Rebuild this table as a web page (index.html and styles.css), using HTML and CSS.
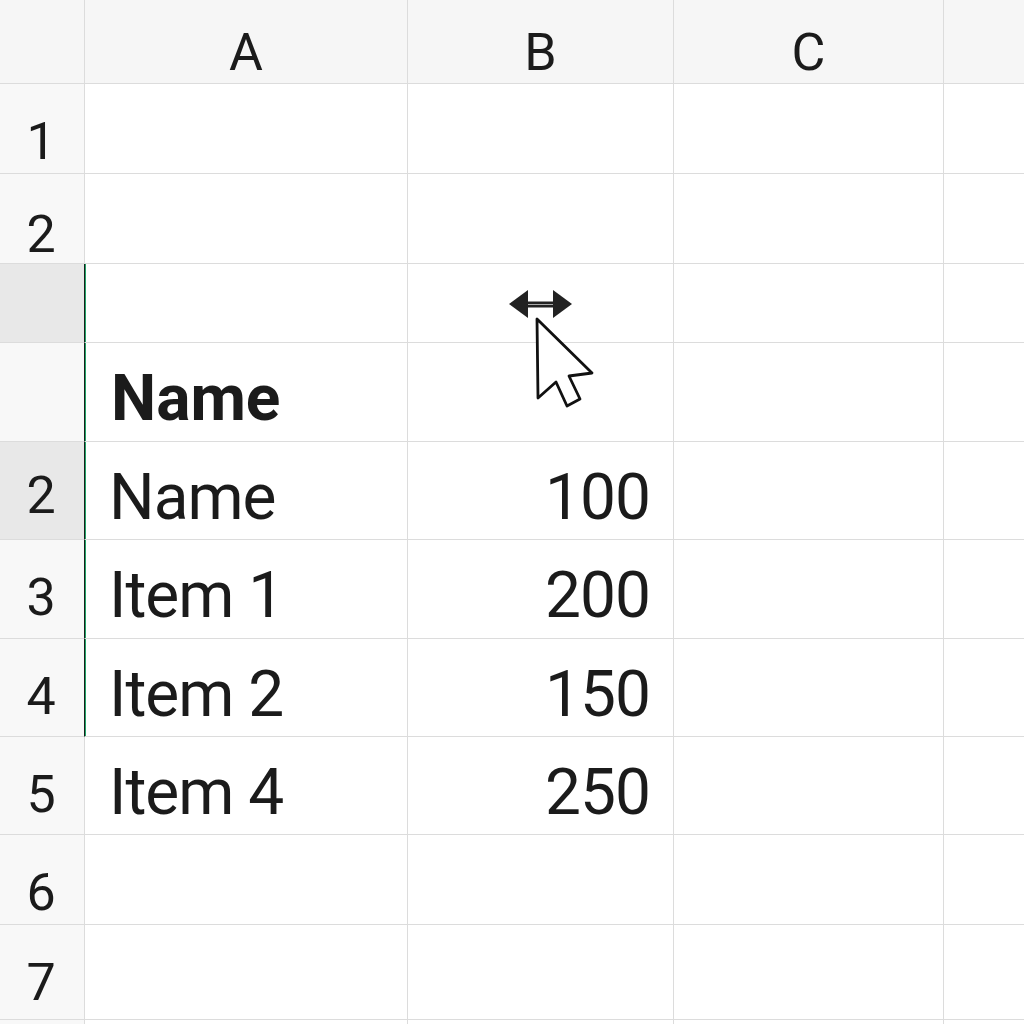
FILE: index.html
```html
<!DOCTYPE html>
<html lang="en">
<head>
<meta charset="utf-8">
<title>Sheet</title>
<link rel="stylesheet" href="styles.css">
</head>
<body>
<div class="sheet">
  <div class="grid">
    <div class="corner"></div>
    <div class="ch">A</div>
    <div class="ch">B</div>
    <div class="ch">C</div>
    <div class="ch last"></div>

    <div class="rh">1</div><div class="c"></div><div class="c"></div><div class="c"></div><div class="c last"></div>
    <div class="rh r2">2</div><div class="c"></div><div class="c"></div><div class="c"></div><div class="c last"></div>
    <div class="rh hl"></div><div class="c sel"></div><div class="c"></div><div class="c"></div><div class="c last"></div>
    <div class="rh sel-rh"></div><div class="c sel bold">Name</div><div class="c"></div><div class="c"></div><div class="c last"></div>
    <div class="rh hl">2</div><div class="c sel">Name</div><div class="c num">100</div><div class="c"></div><div class="c last"></div>
    <div class="rh sel-rh">3</div><div class="c sel">Item 1</div><div class="c num">200</div><div class="c"></div><div class="c last"></div>
    <div class="rh sel-rh">4</div><div class="c sel">Item 2</div><div class="c num">150</div><div class="c"></div><div class="c last"></div>
    <div class="rh">5</div><div class="c">Item 4</div><div class="c num">250</div><div class="c"></div><div class="c last"></div>
    <div class="rh">6</div><div class="c"></div><div class="c"></div><div class="c"></div><div class="c last"></div>
    <div class="rh">7</div><div class="c"></div><div class="c"></div><div class="c"></div><div class="c last"></div>
    <div class="rh"></div><div class="c"></div><div class="c"></div><div class="c"></div><div class="c last"></div>
  </div>

  <svg class="cursor" width="110" height="140" viewBox="0 0 110 140" aria-hidden="true">
    <g fill="#222">
      <polygon points="9,24 28,10 28,38"/>
      <polygon points="72,24 53,10 53,38"/>
      <rect x="27" y="21.5" width="27" height="6"/>
    </g>
    <rect x="28" y="24" width="25" height="1" fill="#aaa"/>
    <polygon points="37,39 38,118 56,102 67,126 80,119 69,96 92,93" fill="#fff" stroke="#111" stroke-width="2.8" stroke-linejoin="round"/>
  </svg>
</div>
</body>
</html>
```

FILE: styles.css
```css
* { box-sizing: border-box; }

html, body {
  margin: 0;
  padding: 0;
  background: #ffffff;
}

.sheet {
  position: relative;
  width: 1024px;
  height: 1024px;
  overflow: hidden;
  font-family: Roboto, "Open Sans", sans-serif;
  color: #1b1b1b;
}

.grid {
  display: grid;
  grid-template-columns: 85px 323px 266px 270px 120px;
  grid-template-rows: 84px 90px 90px 79px 99px 98px 99px 98px 98px 90px 95px 40px;
}

.grid > div {
  border-right: 1px solid #dcdcdc;
  border-bottom: 1px solid #dcdcdc;
  line-height: 1;
}

.corner {
  background: #f6f6f6;
}

.ch {
  background: #f6f6f6;
  font-size: 52px;
  text-align: center;
  padding-top: 27px;
}

.rh {
  background: #f8f8f8;
  font-size: 52px;
  text-align: center;
  padding-top: 32px;
  padding-right: 2px;
}

.rh.r2 {
  padding-top: 35px;
}

.rh.hl {
  background: #e8e8e8;
  padding-top: 28px;
  border-right-color: #14221b;
}

.rh.sel-rh {
  border-right-color: #14221b;
}

.c {
  background: #ffffff;
  font-size: 64px;
  padding-top: 24px;
  padding-left: 24px;
  white-space: nowrap;
  letter-spacing: -1px;
}

.c.sel {
  box-shadow: inset 1px 0 0 #21a366;
}

.c.num {
  text-align: right;
  padding-left: 0;
  padding-right: 23px;
}

.c.bold {
  font-weight: 700;
  letter-spacing: 0;
  padding-left: 26px;
}

.cursor {
  position: absolute;
  left: 500px;
  top: 280px;
}
```
